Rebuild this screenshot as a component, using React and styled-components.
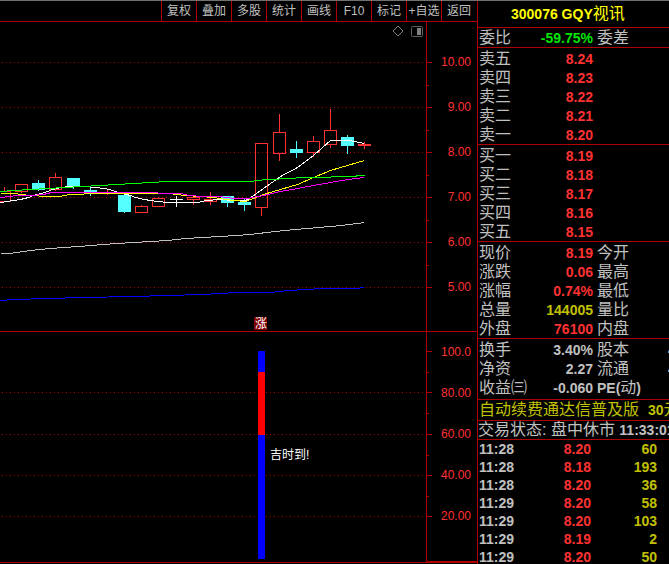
import React from "react";
import styled, { createGlobalStyle } from "styled-components";

const GlobalStyle = createGlobalStyle`
  * {
    box-sizing: border-box;
  }

  body {
    margin: 0;
    background: #000000;
    color: #c0c0c0;
    font-family: "Liberation Sans", "Noto Sans CJK SC", sans-serif;
    font-size: 12px;
  }
`;

const LINE = "#b00000";
const UP = "#ff3232";
const DOWN = "#54ffff";

const Terminal = styled.div`
  display: flex;
  height: 100vh;
  overflow: hidden;
  border-top: 1px solid #707070;
`;

const Main = styled.main`
  flex: 1;
  min-width: 0;
`;

const Toolbar = styled.nav`
  display: flex;
  justify-content: flex-end;
  height: 21px;
  padding-right: 1px;
  border-bottom: 1px solid ${LINE};
`;

const ToolButton = styled.button`
  width: 35px;
  padding: 0;
  border: 0;
  border-left: 1px solid ${LINE};
  background: none;
  color: #c0c0c0;
  font: inherit;
  line-height: 20px;
  white-space: nowrap;
  cursor: pointer;
`;

const Pane = styled.section`
  display: flex;
  height: ${(props) => props.$height}px;
  border-bottom: 1px solid ${LINE};
`;

const Plot = styled.div`
  position: relative;
  flex: 1;
  min-width: 0;

  & > svg {
    display: block;
    width: 100%;
    height: 100%;
  }
`;

const PlotTools = styled.div`
  position: absolute;
  top: 3px;
  right: 3px;
  display: flex;
  gap: 6px;

  & > button {
    display: flex;
    padding: 0;
    border: 0;
    background: none;
    cursor: pointer;
  }
`;

const Axis = styled.div`
  display: flex;
  width: 51px;
  border-left: 1px solid ${LINE};
  border-bottom: ${(props) => (props.$closed ? 1 : 0)}px solid ${LINE};

  & > svg {
    flex: none;
    width: 6px;
    height: 100%;
  }
`;

const AxisLabels = styled.div`
  flex: 1;
  padding: ${(props) => props.$top}px 6px 0 0;
  color: ${UP};
  line-height: ${(props) => props.$step}px;
  text-align: right;
`;

const Side = styled.aside`
  flex: 0 0 192px;
  min-width: 0;
  overflow: hidden;
  border-left: 1px solid ${LINE};
  font-size: 16px;
  white-space: nowrap;
`;

const Title = styled.h1`
  margin: 0;
  padding-left: 33px;
  border-bottom: 1px solid ${LINE};
  color: #ffff00;
  font-size: 16px;
  font-weight: 400;
  line-height: 26px;
`;

const Num = styled.b`
  color: ${(props) => props.$color || "inherit"};
  font-size: 14px;
  font-weight: 700;
  line-height: 1;
`;

const Block = styled.div`
  padding: ${(props) => props.$top || 0}px 0 ${(props) => props.$bottom || 0}px;
  border-bottom: 1px solid ${LINE};
`;

const Table = styled.table`
  width: 100%;
  border-collapse: collapse;
  table-layout: fixed;

  th,
  td {
    height: ${(props) => props.$row}px;
    padding: 0;
    font-weight: 400;
    line-height: ${(props) => props.$row}px;
    text-align: left;
    vertical-align: top;
  }

  th {
    padding-left: 1px;
  }

  .num {
    text-align: right;
  }

  .second {
    padding-left: 4px;
  }
`;

const Bar = styled.div`
  padding-left: ${(props) => props.$indent || 0}px;
  border-bottom: 1px solid ${LINE};
  color: ${(props) => props.$color};
  line-height: ${(props) => props.$line}px;
`;

const tools = ["复权", "叠加", "多股", "统计", "画线", "F10", "标记", "+自选", "返回"];

// centre x, body top, body bottom, high, low
const candles = [
  { x: 4, top: 191, bottom: 201, high: 187, low: 201, type: "up" },
  { x: 21, top: 184, bottom: 191, high: 184, low: 192, type: "up" },
  { x: 38, top: 183, bottom: 189, high: 180, low: 190, type: "down" },
  { x: 55, top: 177, bottom: 189, high: 173, low: 190, type: "up" },
  { x: 73, top: 178, bottom: 186, high: 178, low: 188, type: "down" },
  { x: 90, top: 190, bottom: 193, high: 188, low: 195, type: "down" },
  { x: 107, top: 192, bottom: 192, high: 189, low: 194, type: "up" },
  { x: 124, top: 195, bottom: 211, high: 194, low: 212, type: "down" },
  { x: 141, top: 206, bottom: 212, high: 205, low: 212, type: "up" },
  { x: 158, top: 198, bottom: 206, high: 197, low: 206, type: "up" },
  { x: 176, top: 199, bottom: 199, high: 196, low: 206, type: "flat" },
  { x: 193, top: 197, bottom: 199, high: 195, low: 204, type: "up" },
  { x: 210, top: 199, bottom: 201, high: 192, low: 204, type: "up" },
  { x: 227, top: 196, bottom: 202, high: 196, low: 206, type: "down" },
  { x: 244, top: 202, bottom: 204, high: 199, low: 210, type: "down" },
  { x: 261, top: 143, bottom: 207, high: 143, low: 215, type: "up" },
  { x: 279, top: 132, bottom: 153, high: 114, low: 160, type: "up" },
  { x: 296, top: 149, bottom: 152, high: 141, low: 157, type: "down" },
  { x: 313, top: 141, bottom: 152, high: 136, low: 156, type: "up" },
  { x: 330, top: 130, bottom: 144, high: 109, low: 147, type: "up" },
  { x: 347, top: 137, bottom: 145, high: 135, low: 153, type: "down" },
  { x: 364, top: 144, bottom: 145, high: 142, low: 148, type: "up" },
];

const averages = [
  {
    color: "#c0c0c0",
    points: "0,253 9,253 30,250 50,248 78,246 116,243 133,242 150,241 167,240 185,238 202,237 219,236 236,235 249,234 284,230 318,227 341,225 364,222",
  },
  {
    color: "#0000ff",
    points: "0,300 13,299 48,298 82,297 133,296 167,295 202,294 219,293 236,292 270,292 288,290 305,289 322,288 356,288 364,287",
  },
  {
    color: "#ffffff",
    points:
      "0,202 7,201 13,200 20,199 28,197 33,195 41,193 47,191 52,189 60,187 69,186 82,186 96,187 103,188 109,189 115,191 122,193 130,195 135,197 144,199 156,201 168,202 197,202 206,200 220,199 233,200 245,200 249,198 263,188 280,176 297,167 313,155 330,140 349,140 364,143",
  },
  {
    color: "#ffff00",
    points:
      "0,193 13,193 30,195 47,196 59,196 69,194 99,193 168,193 185,195 200,196 213,197 225,199 233,200 245,201 263,194 280,189 297,184 313,177 330,170 347,165 364,160",
  },
  {
    color: "#ff00ff",
    points:
      "0,197 9,196 17,195 30,195 43,194 51,192 150,192 165,193 180,193 189,195 202,196 218,196 235,198 247,198 263,195 280,191 297,188 313,185 330,182 347,179 364,177",
  },
  {
    color: "#00ff00",
    points:
      "0,191 13,190 30,189 47,188 64,187 82,186 99,185 116,184 133,183 150,182 167,181 253,181 254,180 270,179 287,178 304,177 322,177 339,176 355,176 357,175 364,175",
  },
];

const book = [
  [
    ["卖五", "8.24"],
    ["卖四", "8.23"],
    ["卖三", "8.22"],
    ["卖二", "8.21"],
    ["卖一", "8.20"],
  ],
  [
    ["买一", "8.19"],
    ["买二", "8.18"],
    ["买三", "8.17"],
    ["买四", "8.16"],
    ["买五", "8.15"],
  ],
];

const quote = [
  ["现价", "8.19", UP, "今开"],
  ["涨跌", "0.06", UP, "最高"],
  ["涨幅", "0.74%", UP, "最低"],
  ["总量", "144005", "#c0c000", "量比"],
  ["外盘", "76100", UP, "内盘"],
];

const finance = [
  ["换手", "3.40%", "#c0c0c0", "股本", "4"],
  ["净资", "2.27", "#c0c0c0", "流通", "4"],
  ["收益㈢", "-0.060", "#c0c0c0", <><Num>PE(</Num>动<Num>)</Num></>],
];

const trades = [
  ["11:28", "8.20", "60"],
  ["11:28", "8.18", "193"],
  ["11:28", "8.20", "36"],
  ["11:29", "8.20", "58"],
  ["11:29", "8.20", "103"],
  ["11:29", "8.19", "2"],
  ["11:29", "8.20", "50"],
];

function Grid({ rows }) {
  return rows.map((y) => (
    <line key={y} x1="2" x2="100%" y1={y + 0.5} y2={y + 0.5} stroke={LINE} strokeDasharray="1 3" />
  ));
}

function Candle({ x, top, bottom, high, low, type }) {
  const color = { up: UP, down: DOWN, flat: "#ffffff" }[type];
  const height = bottom - top + 1;
  return (
    <g fill={color}>
      <rect x={x} y={high} width="1" height={top - high} />
      <rect x={x} y={bottom} width="1" height={low - bottom + 1} />
      {type === "up" && height > 2 ? (
        <rect x={x - 5.5} y={top + 0.5} width="12" height={height - 1} fill="none" stroke={color} />
      ) : (
        <rect x={x - 6} y={top} width="13" height={height} />
      )}
    </g>
  );
}

function Ticks({ major, minor }) {
  return (
    <svg shapeRendering="crispEdges" fill={LINE} aria-hidden="true">
      {major.map((y) => (
        <rect key={y} x="0" y={y} width="5" height="1" />
      ))}
      {minor.map((y) => (
        <rect key={y} x="0" y={y} width="2" height="1" />
      ))}
    </svg>
  );
}

function PricePane() {
  return (
    <Pane $height={310}>
      <Plot>
        <svg shapeRendering="crispEdges">
          <Grid rows={[40, 85, 130, 175, 220, 265]} />
          <g transform="translate(0 -22)">
            {candles.map((candle) => (
              <Candle key={candle.x} {...candle} />
            ))}
            <g transform="translate(0.5 0.5)" fill="none">
              {averages.map((line) => (
                <polyline key={line.color} points={line.points} stroke={line.color} />
              ))}
            </g>
            <rect x="254" y="317" width="13" height="13" fill="#800000" />
            <text x="255" y="328" fontSize="12" fill="#ffffff">
              涨
            </text>
          </g>
        </svg>
        <PlotTools>
          <button aria-label="标记点">
            <svg width="12" height="12" fill="none" stroke="#808080">
              <path d="M6 1 L11 6 L6 11 L1 6 Z" />
            </svg>
          </button>
          <button aria-label="侧栏">
            <svg width="13" height="12" fill="none" stroke="#606060">
              <rect x="1.5" y="1.5" width="11" height="10" rx="1" />
              <rect x="7" y="3" width="4" height="7" fill="#808080" stroke="none" />
            </svg>
          </button>
        </PlotTools>
      </Plot>
      <Axis>
        <Ticks major={[40, 85, 130, 175, 220, 265]} minor={[63, 108, 153, 198, 243]} />
        <AxisLabels $top={18} $step={45}>
          {["10.00", "9.00", "8.00", "7.00", "6.00", "5.00"].map((label) => (
            <div key={label}>{label}</div>
          ))}
        </AxisLabels>
      </Axis>
    </Pane>
  );
}

function SignalPane() {
  return (
    <Pane $height={231}>
      <Plot>
        <svg shapeRendering="crispEdges">
          <Grid rows={[60, 102, 143, 184]} />
          <rect x="258" y="19" width="7" height="208" fill="#0000ff" />
          <rect x="258" y="40" width="7" height="63" fill="#ff0000" />
          <text x="270" y="127" fontSize="12" fill="#ffffff">
            吉时到!
          </text>
        </svg>
      </Plot>
      <Axis $closed>
        <Ticks major={[19, 60, 102, 143, 184]} minor={[40, 81, 123, 164]} />
        <AxisLabels $top={0} $step={41}>
          {["100.0", "80.00", "60.00", "40.00", "20.00"].map((label) => (
            <div key={label}>{label}</div>
          ))}
        </AxisLabels>
      </Axis>
    </Pane>
  );
}

function QuoteTable({ rows }) {
  return (
    <Table $row={19}>
      <colgroup>
        <col width="51" />
        <col width="64" />
        <col width="75" />
        <col />
      </colgroup>
      <tbody>
        {rows.map(([label, value, color, second, rest]) => (
          <tr key={label}>
            <th scope="row">{label}</th>
            <td className="num">
              <Num $color={color}>{value}</Num>
            </td>
            <td className="second">{second}</td>
            <td>{rest && <Num>{rest}</Num>}</td>
          </tr>
        ))}
      </tbody>
    </Table>
  );
}

export default function App() {
  return (
    <>
      <GlobalStyle />
      <Terminal>
        <Main>
          <Toolbar>
            {tools.map((tool) => (
              <ToolButton key={tool}>{tool}</ToolButton>
            ))}
          </Toolbar>
          <PricePane />
          <SignalPane />
        </Main>
        <Side>
          <Title>
            <Num>300076 GQY</Num>视讯
          </Title>
          <Block>
            <QuoteTable rows={[["委比", "-59.75%", "#00e600", "委差"]]} />
          </Block>
          {book.map((side) => (
            <Block key={side[0][0]} $top={1}>
              <QuoteTable rows={side.map(([label, price]) => [label, price, UP])} />
            </Block>
          ))}
          <Block $top={1}>
            <QuoteTable rows={quote} />
          </Block>
          <Block $top={1} $bottom={2}>
            <QuoteTable rows={finance} />
          </Block>
          <Bar $line={20} $indent={1} $color="#c0c000">
            自动续费通达信普及版&nbsp; <Num>30</Num>元
          </Bar>
          <Bar $line={18} $color="#c0c0c0">
            交易状态: 盘中休市 <Num>11:33:01</Num>
          </Bar>
          <Table $row={18}>
            <colgroup>
              <col width="51" />
              <col width="62" />
              <col width="66" />
              <col />
            </colgroup>
            <tbody>
              {trades.map(([time, price, volume], i) => (
                <tr key={i}>
                  <th scope="row">
                    <Num>{time}</Num>
                  </th>
                  <td className="num">
                    <Num $color={UP}>{price}</Num>
                  </td>
                  <td className="num">
                    <Num $color="#c0c000">{volume}</Num>
                  </td>
                  <td />
                </tr>
              ))}
            </tbody>
          </Table>
        </Side>
      </Terminal>
    </>
  );
}
